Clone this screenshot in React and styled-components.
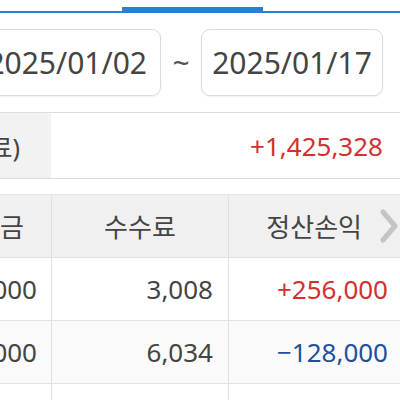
import React from "react"
import styled, { createGlobalStyle } from "styled-components"

const GlobalStyle = createGlobalStyle`
  html, body {
    margin: 0;
    padding: 0;
    background: #fff;
  }
  body {
    font-family: "Noto Sans", "Noto Sans CJK KR", sans-serif;
    color: #444;
  }
`

const Screen = styled.div`
  width: 400px;
  height: 400px;
  overflow: hidden;
  background: #fff;
`

const Tabs = styled.div`
  display: flex;
  align-items: flex-end;
  height: 13px;
  box-sizing: border-box;
  border-bottom: 2px solid #2b7fd4;
`

const Tab = styled.div`
  flex: ${p => (p.$width ? `0 0 ${p.$width}px` : "1")};
  height: 4px;
  background: ${p => (p.$active ? "#2b7fd4" : "transparent")};
`

const DateRow = styled.div`
  display: flex;
  align-items: center;
  margin-top: 16px;
`

const DateBox = styled.div`
  display: flex;
  align-items: center;
  justify-content: ${p => (p.$cut ? "flex-end" : "center")};
  box-sizing: border-box;
  width: ${p => p.$width}px;
  height: 67px;
  padding: 0 13px;
  border: 1px solid #dadada;
  border-left: ${p => (p.$cut ? "none" : "1px solid #dadada")};
  border-radius: ${p => (p.$cut ? "0 9px 9px 0" : "9px")};
  box-shadow: 0 1px 2px rgba(0, 0, 0, 0.06);
  font-size: 30px;
  color: #444;
  white-space: nowrap;
`

const Tilde = styled.div`
  width: 40px;
  text-align: center;
  font-size: 30px;
  color: #555;
`

const Summary = styled.div`
  display: grid;
  grid-template-columns: 51px 1fr;
  box-sizing: border-box;
  height: 67px;
  margin-top: 16px;
  border-top: 1px solid #dcdcdc;
  border-bottom: 1px solid #dcdcdc;
`

const Label = styled.div`
  display: flex;
  align-items: center;
  justify-content: flex-end;
  padding-right: 31px;
  overflow: hidden;
  white-space: nowrap;
  background: #f2f2f2;
  font-size: 25px;
  color: #444;
`

const Amount = styled.div`
  display: flex;
  align-items: center;
  justify-content: flex-end;
  padding-right: 17px;
  font-size: 26px;
  color: ${p => p.$color || "#444"};
`

const Table = styled.div`
  margin-top: 15px;
  border-top: 1px solid #e6e6e6;
`

const Row = styled.div`
  display: grid;
  grid-template-columns: 51px 177px 1fr;
  height: 63px;
  box-sizing: border-box;
  border-bottom: 1px solid #e2e2e2;
  background: ${p => p.$bg || "#fff"};
`

const Cell = styled.div`
  display: flex;
  align-items: center;
  justify-content: ${p => p.$align || "flex-end"};
  gap: 18px;
  padding-right: ${p => p.$pad ?? 14}px;
  overflow: hidden;
  white-space: nowrap;
  border-left: ${p => (p.$first ? "none" : "1px solid #e0e0e0")};
  font-size: 26px;
  color: ${p => p.$color || "#444"};
`

const Chevron = () => (
  <svg width="18" height="34" viewBox="0 0 18 34">
    <polyline
      points="3,3 15,17 3,31"
      fill="none"
      stroke="#c4c4c4"
      strokeWidth="5"
      strokeLinecap="round"
      strokeLinejoin="round"
    />
  </svg>
)

const RED = "#d3302f"
const BLUE = "#1f4f9e"

const rows = [
  { amount: "1,256,000", fee: "3,008", pnl: "+256,000", color: RED },
  { amount: "1,128,000", fee: "6,034", pnl: "\u2212128,000", color: BLUE, bg: "#fafafa" },
]

const App = () => {
  return (
    <Screen>
      <GlobalStyle />
      <Tabs>
        <Tab $width={122} />
        <Tab $width={141} $active />
        <Tab />
      </Tabs>

      <DateRow>
        <DateBox $cut $width={161}>2025/01/02</DateBox>
        <Tilde>~</Tilde>
        <DateBox $width={182}>2025/01/17</DateBox>
      </DateRow>

      <Summary>
        <Label>합계(수수료)</Label>
        <Amount $color={RED}>+1,425,328</Amount>
      </Summary>

      <Table>
        <Row $bg="#f0f0f0">
          <Cell $first $pad={27}>정산금</Cell>
          <Cell $align="center" $pad={0}>수수료</Cell>
          <Cell $pad={2}>
            정산손익
            <Chevron />
          </Cell>
        </Row>
        {rows.map((r, i) => (
          <Row key={i} $bg={r.bg}>
            <Cell $first>{r.amount}</Cell>
            <Cell $pad={15}>{r.fee}</Cell>
            <Cell $pad={12} $color={r.color}>{r.pnl}</Cell>
          </Row>
        ))}
        <Row>
          <Cell $first />
          <Cell />
          <Cell />
        </Row>
      </Table>
    </Screen>
  )
}

export default App
